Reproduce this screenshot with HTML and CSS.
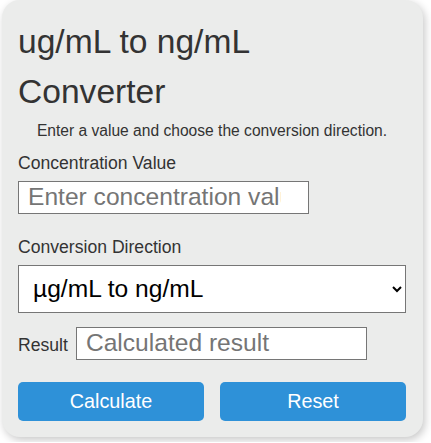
FILE: index.html
```html
<!DOCTYPE html>
<html lang="en">
  <head>
    <meta charset="UTF-8" />
    <meta name="viewport" content="width=device-width, initial-scale=1.0" />
    <title>ug/mL to ng/mL Converter</title>
    <link rel="stylesheet" href="styles.css">
  </head>
  <body>
    <div class="converter">
      <h1>ug/mL to ng/mL Converter</h1>
      <p class="intro">Enter a value and choose the conversion direction.</p>

      <div class="field">
        <label for="value">Concentration Value</label>
        <input type="text" inputmode="decimal" id="value" class="text-input" placeholder="Enter concentration value" />
      </div>

      <div class="field">
        <label for="direction">Conversion Direction</label>
        <select id="direction" class="direction">
          <option value="ug-ng">µg/mL to ng/mL</option>
          <option value="ng-ug">ng/mL to µg/mL</option>
        </select>
      </div>

      <div class="result-row">
        <label for="result">Result</label>
        <input type="text" id="result" class="text-input" placeholder="Calculated result" readonly />
      </div>

      <div class="actions">
        <button id="calculate" class="btn">Calculate</button>
        <button id="reset" class="btn">Reset</button>
      </div>
    </div>

    <script>
      const valueInput = document.getElementById("value");
      const direction = document.getElementById("direction");
      const resultInput = document.getElementById("result");

      function calculate() {
        const value = parseFloat(valueInput.value);
        if (isNaN(value)) {
          resultInput.value = "";
          return;
        }
        const result = direction.value === "ug-ng" ? value * 1000 : value / 1000;
        const unit = direction.value === "ug-ng" ? "ng/mL" : "µg/mL";
        resultInput.value = `${result} ${unit}`;
      }

      function reset() {
        valueInput.value = "";
        resultInput.value = "";
        direction.value = "ug-ng";
      }

      document.getElementById("calculate").addEventListener("click", calculate);
      document.getElementById("reset").addEventListener("click", reset);
    </script>
  </body>
</html>
```

FILE: styles.css
```css
* {
  box-sizing: border-box;
}

body {
  margin: 0;
  background-color: #ffffff;
  font-family: "Liberation Sans", Arial, sans-serif;
  color: #333;
  line-height: 1.5;
}

.converter {
  width: 421px;
  margin: 0 0 5px 2px;
  padding: 17px 17px 16px 16px;
  background-color: #ebeceb;
  border-radius: 18px;
  box-shadow: 2px 3px 9px rgba(0, 0, 0, 0.22);
}

h1 {
  max-width: 320px;
  margin: 0;
  font-size: 33.6px;
  font-weight: normal;
  line-height: 49.8px;
  color: #333;
}

.intro {
  margin: 2px 0 8px;
  font-size: 15.6px;
  text-align: center;
}

.field {
  margin-bottom: 20px;
}

.field label {
  display: block;
  margin-bottom: 4.5px;
  font-size: 17.6px;
}

.text-input {
  width: 291px;
  height: 33px;
  padding: 0 27px 0 9px;
  border: 1px solid #767676;
  border-radius: 0;
  background-color: #fff;
  font-family: inherit;
  font-size: 24.6px;
  color: #000;
}

.text-input::placeholder {
  color: #757575;
}

.direction {
  display: block;
  width: 100%;
  height: 48px;
  padding: 0 4px 0 10px;
  border: 1px solid #767676;
  border-radius: 0;
  background-color: #fff;
  font-family: inherit;
  font-size: 24.6px;
  color: #000;
}

.result-row {
  display: flex;
  align-items: baseline;
  gap: 8px;
  margin-top: -6px;
}

.result-row label {
  font-size: 17.6px;
}

.actions {
  display: flex;
  gap: 16px;
  margin-top: 22.5px;
}

.btn {
  flex: 1;
  height: 39px;
  border: none;
  border-radius: 5px;
  background-color: #2e91d8;
  color: #fff;
  font-family: inherit;
  font-size: 19.8px;
  cursor: pointer;
}

.btn:hover {
  background-color: #2479b8;
}
```
